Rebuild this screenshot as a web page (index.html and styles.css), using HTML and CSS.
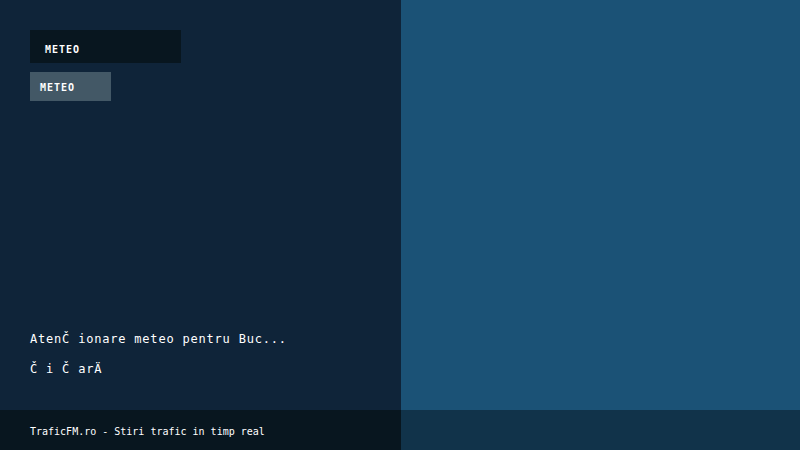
FILE: index.html
```html
<!DOCTYPE html>
<html>
<head>
<meta charset="utf-8">
<link rel="stylesheet" href="styles.css">
</head>
<body>
<div class="screen">
  <div class="main">
    <section class="left">
      <div class="tabs">
        <div class="btn btn-dark">METEO</div>
        <div class="btn btn-grey">METEO</div>
      </div>
      <div class="news">
        <p class="line">AtenČ ionare meteo pentru Buc...</p>
        <p class="line">Č i Č arÄ</p>
      </div>
    </section>
    <section class="right"></section>
  </div>
  <footer class="footer">
    <div class="foot-left">TraficFM.ro - Stiri trafic in timp real</div>
    <div class="foot-right"></div>
  </footer>
</div>
</body>
</html>
```
FILE: styles.css
```css
* { box-sizing: border-box; }
html, body { margin: 0; padding: 0; }
body {
  width: 800px;
  height: 450px;
  overflow: hidden;
  font-family: "DejaVu Sans Mono", "Liberation Mono", monospace;
  color: #ffffff;
  background: #0f2439;
}
.screen {
  display: flex;
  flex-direction: column;
  width: 800px;
  height: 450px;
}
.main {
  display: grid;
  grid-template-columns: 401px 1fr;
  height: 410px;
}
.left {
  background: #0f2439;
  padding: 30px;
  display: flex;
  flex-direction: column;
  justify-content: space-between;
}
.right {
  background: #1b5276;
}
.tabs {
  display: flex;
  flex-direction: column;
  align-items: flex-start;
  gap: 9px;
}
.btn {
  font-size: 10px;
  font-weight: bold;
  letter-spacing: 1px;
  display: flex;
  align-items: center;
}
.btn-dark {
  background: #08161f;
  width: 151px;
  height: 33px;
  padding-left: 15px;
  padding-top: 5px;
}
.btn-grey {
  background: #435866;
  width: 81px;
  height: 29px;
  padding-left: 10px;
  padding-top: 1px;
}
.news {
  display: flex;
  flex-direction: column;
  gap: 11px;
  padding-bottom: 1px;
}
.line {
  margin: 0;
  font-size: 12px;
  letter-spacing: 0.8px;
  line-height: 19px;
}
.footer {
  display: grid;
  grid-template-columns: 401px 1fr;
  height: 40px;
}
.foot-left {
  background: #08161f;
  font-size: 10px;
  padding-left: 30px;
  display: flex;
  align-items: center;
  padding-top: 2px;
}
.foot-right {
  background: #11334a;
}
```
